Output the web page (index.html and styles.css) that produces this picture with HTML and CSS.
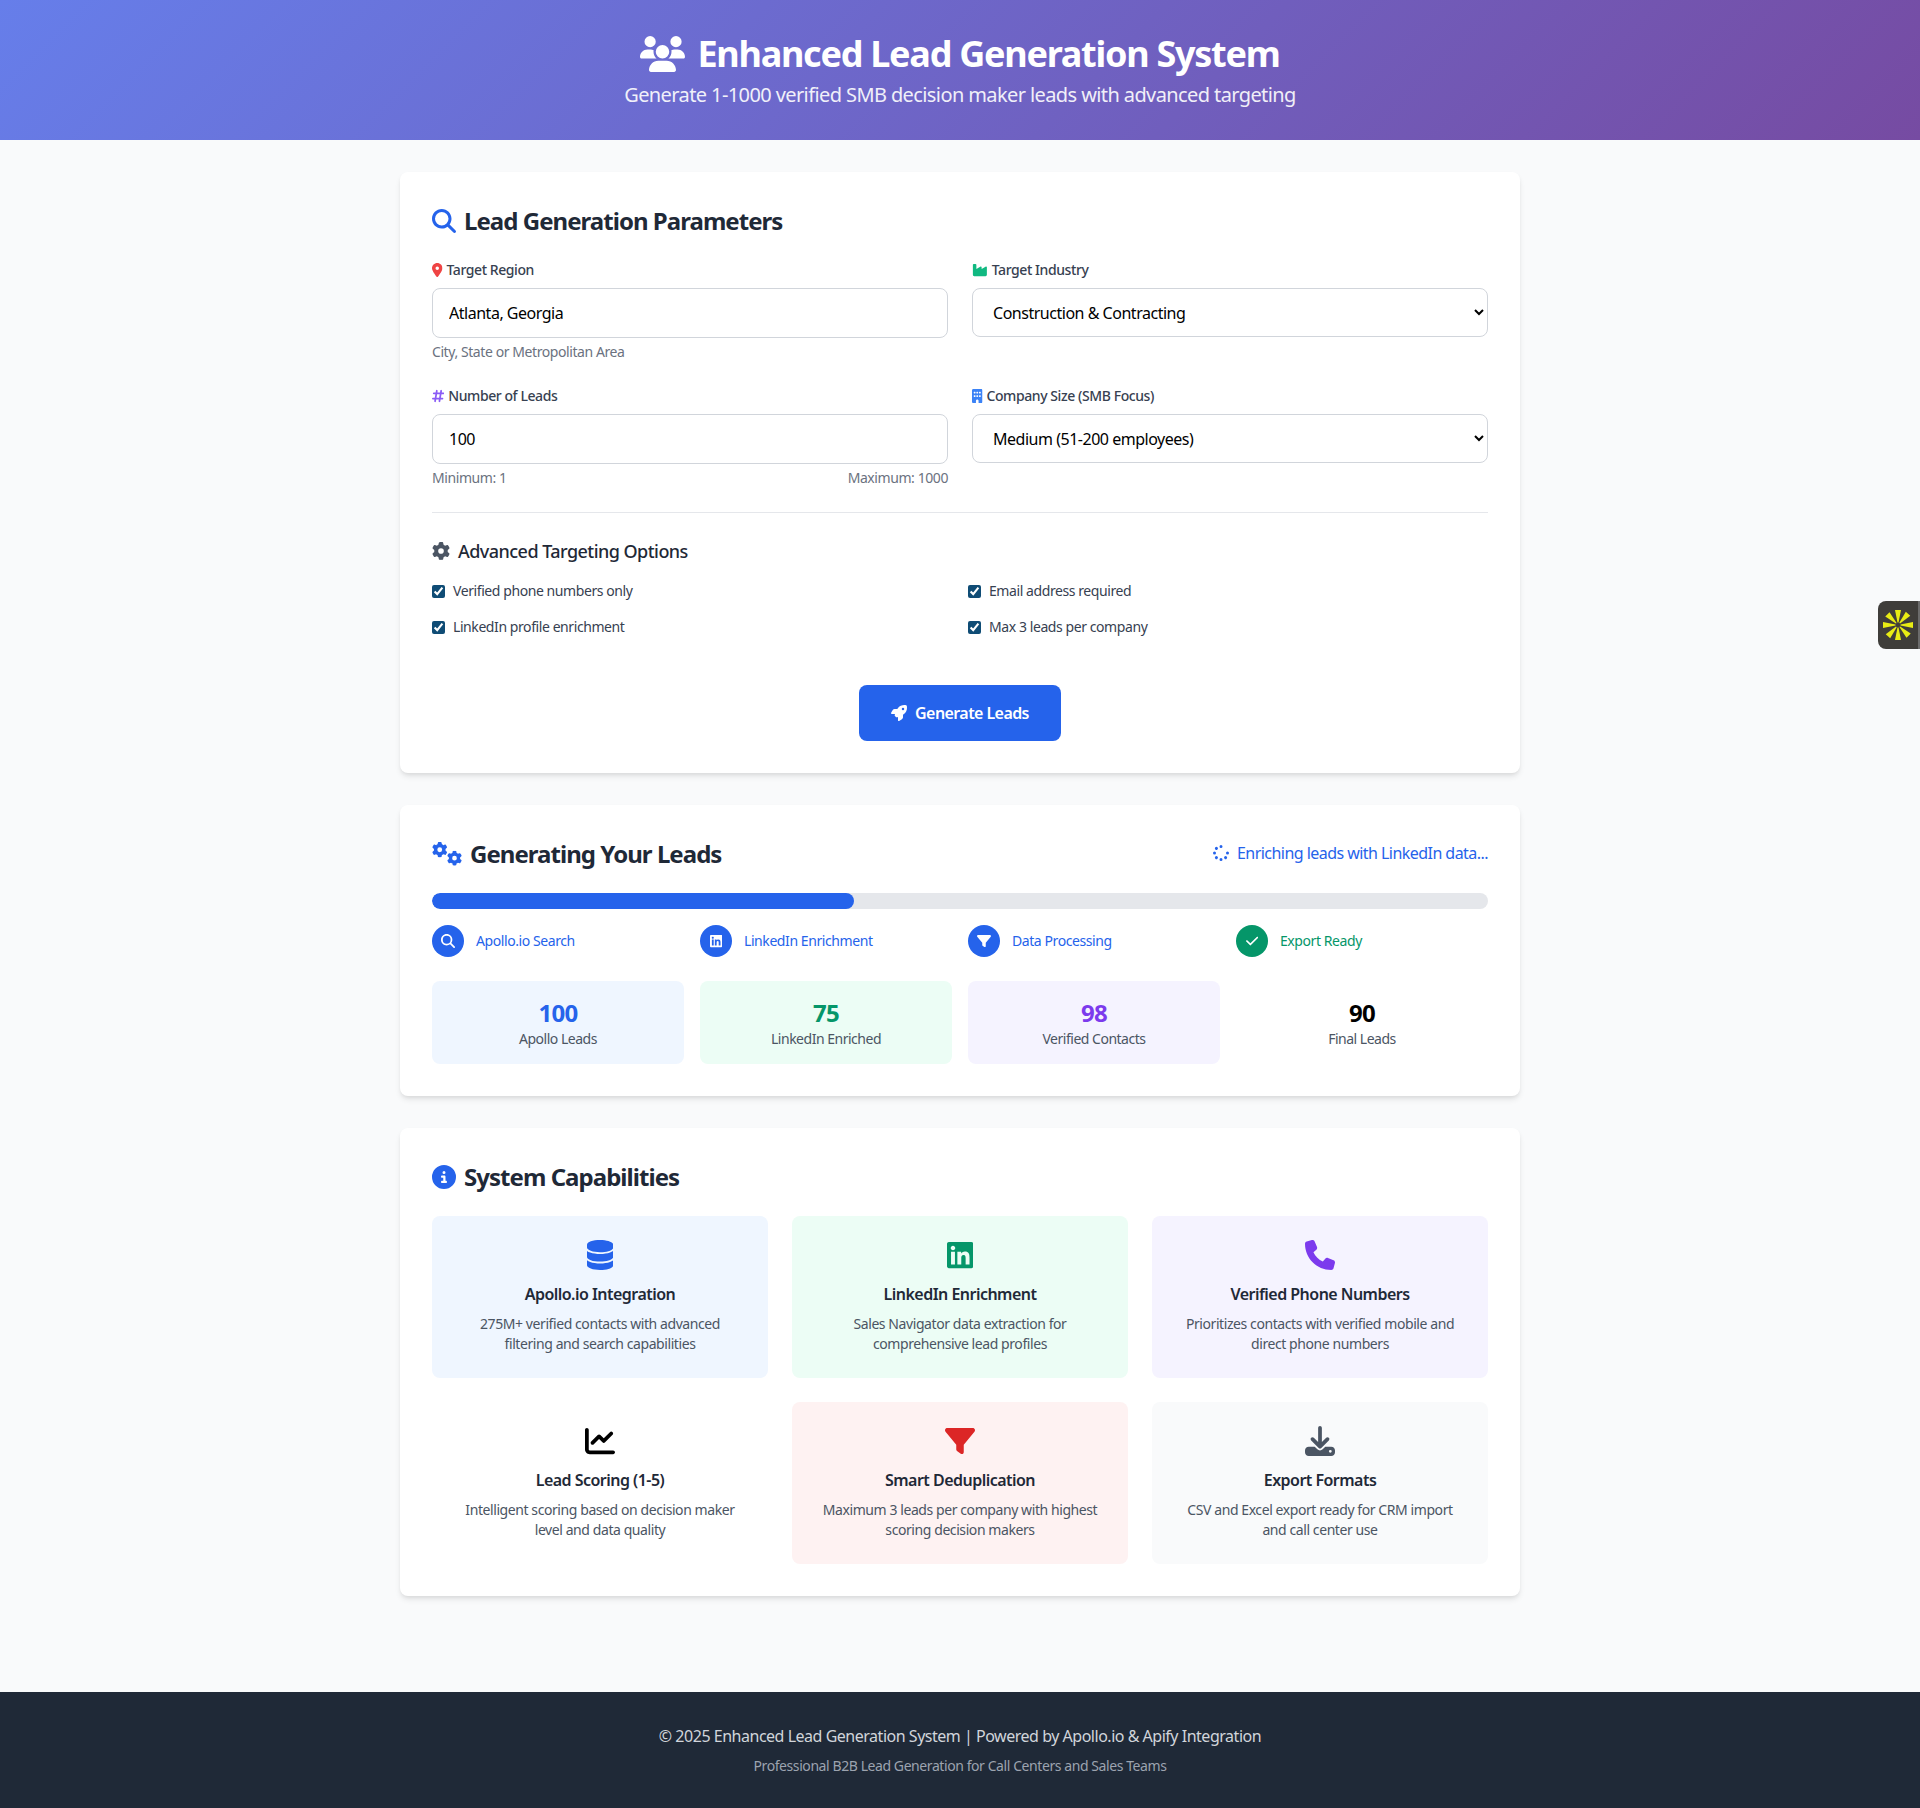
FILE: index.html
```html
<!DOCTYPE html>
<html lang="en">
<head>
   <meta charset="UTF-8">
   <meta name="viewport" content="width=device-width, initial-scale=1.0">
   <title>Enhanced Lead Generation System</title>
   <link rel="stylesheet" href="styles.css">
</head>
<body>
   <svg class="icon-defs" aria-hidden="true">
      <symbol id="i-users" viewBox="0 0 640 512"><path d="M144 0a80 80 0 1 1 0 160A80 80 0 1 1 144 0zM512 0a80 80 0 1 1 0 160A80 80 0 1 1 512 0zM0 298.7C0 239.8 47.8 192 106.7 192h42.7c15.9 0 31 3.5 44.6 9.7c-1.3 7.2-1.9 14.7-1.9 22.3c0 38.2 16.8 72.5 43.3 96c-.2 0-.4 0-.7 0H21.3C9.6 320 0 310.4 0 298.7zM405.3 320c-.2 0-.4 0-.7 0c26.6-23.5 43.3-57.8 43.3-96c0-7.6-.7-15-1.9-22.3c13.6-6.3 28.7-9.7 44.6-9.7h42.7C592.2 192 640 239.8 640 298.7c0 11.8-9.6 21.3-21.3 21.3H405.3zM224 224a96 96 0 1 1 192 0 96 96 0 1 1 -192 0zM128 485.3C128 411.7 187.7 352 261.3 352H378.7C452.3 352 512 411.7 512 485.3c0 14.7-11.9 26.7-26.7 26.7H154.7c-14.7 0-26.7-11.9-26.7-26.7z"/></symbol>
      <symbol id="i-search" viewBox="0 0 512 512"><path d="M416 208c0 45.9-14.9 88.3-40 122.7L502.6 457.4c12.5 12.5 12.5 32.8 0 45.3s-32.8 12.5-45.3 0L330.7 376c-34.4 25.2-76.8 40-122.7 40C93.1 416 0 322.9 0 208S93.1 0 208 0S416 93.1 416 208zM208 352a144 144 0 1 0 0-288 144 144 0 1 0 0 288z"/></symbol>
      <symbol id="i-location" viewBox="0 0 384 512"><path d="M215.7 499.2C267 435 384 279.4 384 192C384 86 298 0 192 0S0 86 0 192c0 87.4 117 243 168.3 307.2c12.3 15.3 35.1 15.3 47.4 0zM192 128a64 64 0 1 1 0 128 64 64 0 1 1 0-128z"/></symbol>
      <symbol id="i-industry" viewBox="0 0 576 512"><path d="M64 32C46.3 32 32 46.3 32 64V304v48 80c0 26.5 21.5 48 48 48H496c26.5 0 48-21.5 48-48V304 152.2c0-18.2-19.4-29.7-35.4-21.1L352 215.4V152.2c0-18.2-19.4-29.7-35.4-21.1L160 215.4V64c0-17.7-14.3-32-32-32H64z"/></symbol>
      <symbol id="i-hashtag" viewBox="0 0 448 512"><path d="M181.3 32.4c17.4 2.9 29.2 19.4 26.3 36.8L197.8 128h95.1l11.5-69.3c2.9-17.4 19.4-29.2 36.8-26.3s29.2 19.4 26.3 36.8L357.8 128H416c17.7 0 32 14.3 32 32s-14.3 32-32 32H347.1L325.8 320H384c17.7 0 32 14.3 32 32s-14.3 32-32 32H315.1l-11.5 69.3c-2.9 17.4-19.4 29.2-36.8 26.3s-29.2-19.4-26.3-36.8l9.8-58.7H155.1l-11.5 69.3c-2.9 17.4-19.4 29.2-36.8 26.3s-29.2-19.4-26.3-36.8L90.2 384H32c-17.7 0-32-14.3-32-32s14.3-32 32-32h68.9l21.3-128H64c-17.7 0-32-14.3-32-32s14.3-32 32-32h68.9l11.5-69.3c2.9-17.4 19.4-29.2 36.8-26.3zM187.1 192L165.8 320h95.1l21.3-128H187.1z"/></symbol>
      <symbol id="i-building" viewBox="0 0 384 512"><path d="M48 0C21.5 0 0 21.5 0 48V464c0 26.5 21.5 48 48 48h96V432c0-26.5 21.5-48 48-48s48 21.5 48 48v80h96c26.5 0 48-21.5 48-48V48c0-26.5-21.5-48-48-48H48zM64 240c0-8.8 7.2-16 16-16h32c8.8 0 16 7.2 16 16v32c0 8.8-7.2 16-16 16H80c-8.8 0-16-7.2-16-16V240zm112-16h32c8.8 0 16 7.2 16 16v32c0 8.8-7.2 16-16 16H176c-8.8 0-16-7.2-16-16V240c0-8.8 7.2-16 16-16zm80 16c0-8.8 7.2-16 16-16h32c8.8 0 16 7.2 16 16v32c0 8.8-7.2 16-16 16H272c-8.8 0-16-7.2-16-16V240zM80 96h32c8.8 0 16 7.2 16 16v32c0 8.8-7.2 16-16 16H80c-8.8 0-16-7.2-16-16V112c0-8.8 7.2-16 16-16zm80 16c0-8.8 7.2-16 16-16h32c8.8 0 16 7.2 16 16v32c0 8.8-7.2 16-16 16H176c-8.8 0-16-7.2-16-16V112zM272 96h32c8.8 0 16 7.2 16 16v32c0 8.8-7.2 16-16 16H272c-8.8 0-16-7.2-16-16V112c0-8.8 7.2-16 16-16z"/></symbol>
      <symbol id="i-gear" viewBox="0 0 512 512"><path d="M495.9 166.6c3.2 8.7 .5 18.4-6.4 24.6l-43.3 39.4c1.1 8.3 1.7 16.8 1.7 25.4s-.6 17.1-1.7 25.4l43.3 39.4c6.9 6.2 9.6 15.9 6.4 24.6c-4.4 11.9-9.7 23.3-15.8 34.3l-4.7 8.1c-6.6 11-14 21.4-22.1 31.2c-5.9 7.2-15.7 9.6-24.5 6.8l-55.7-17.7c-13.4 10.3-28.2 18.9-44 25.4l-12.5 57.1c-2 9.1-9 16.3-18.2 17.8c-13.8 2.3-28 3.5-42.5 3.5s-28.7-1.2-42.5-3.5c-9.2-1.5-16.2-8.7-18.2-17.8l-12.5-57.1c-15.8-6.5-30.6-15.1-44-25.4L83.1 425.9c-8.8 2.8-18.6 .3-24.5-6.8c-8.1-9.8-15.5-20.2-22.1-31.2l-4.7-8.1c-6.1-11-11.4-22.4-15.8-34.3c-3.2-8.7-.5-18.4 6.4-24.6l43.3-39.4C64.6 273.1 64 264.6 64 256s.6-17.1 1.7-25.4L22.4 191.2c-6.9-6.2-9.6-15.9-6.4-24.6c4.4-11.9 9.7-23.3 15.8-34.3l4.7-8.1c6.6-11 14-21.4 22.1-31.2c5.9-7.2 15.7-9.6 24.5-6.8l55.7 17.7c13.4-10.3 28.2-18.9 44-25.4l12.5-57.1c2-9.1 9-16.3 18.2-17.8C227.3 1.2 241.5 0 256 0s28.7 1.2 42.5 3.5c9.2 1.5 16.2 8.7 18.2 17.8l12.5 57.1c15.8 6.5 30.6 15.1 44 25.4l55.7-17.7c8.8-2.8 18.6-.3 24.5 6.8c8.1 9.8 15.5 20.2 22.1 31.2l4.7 8.1c6.1 11 11.4 22.4 15.8 34.3zM256 336a80 80 0 1 0 0-160 80 80 0 1 0 0 160z"/></symbol>
      <symbol id="i-rocket" viewBox="0 0 512 512"><path d="M156.6 384.9L125.7 354c-8.5-8.5-11.5-20.8-7.7-32.2c3-8.9 7-20.5 11.8-33.8L24 288c-8.6 0-16.6-4.6-20.9-12.1s-4.2-16.7 .2-24.1l52.5-88.5c13-21.9 36.5-35.3 61.9-35.3l82.3 0c2.4-4 4.8-7.7 7.2-11.3C289.1-4.1 411.1-8.1 483.9 5.3c11.6 2.1 20.6 11.2 22.8 22.8c13.4 72.9 9.3 194.8-111.4 276.7c-3.5 2.4-7.3 4.8-11.3 7.2v82.3c0 25.4-13.4 49-35.3 61.9l-88.5 52.5c-7.4 4.4-16.6 4.5-24.1 .2s-12.1-12.2-12.1-20.9V380.8c-14.1 4.9-26.4 8.9-35.7 11.9c-11.2 3.6-23.4 .5-31.8-7.8zM384 168a40 40 0 1 0 0-80 40 40 0 1 0 0 80z"/></symbol>
      <symbol id="i-spinner" viewBox="0 0 512 512"><path d="M304 48a48 48 0 1 0 -96 0 48 48 0 1 0 96 0zm0 416a48 48 0 1 0 -96 0 48 48 0 1 0 96 0zM48 304a48 48 0 1 0 0-96 48 48 0 1 0 0 96zm464-48a48 48 0 1 0 -96 0 48 48 0 1 0 96 0zM142.9 437A48 48 0 1 0 75 369.1 48 48 0 1 0 142.9 437zm0-294.2A48 48 0 1 0 75 75a48 48 0 1 0 67.9 67.9zM369.1 437A48 48 0 1 0 437 369.1 48 48 0 1 0 369.1 437z"/></symbol>
      <symbol id="i-linkedin" viewBox="0 0 448 512"><path d="M416 32H31.9C14.3 32 0 46.5 0 64.3v383.4C0 465.5 14.3 480 31.9 480H416c17.6 0 32-14.5 32-32.3V64.3c0-17.8-14.4-32.3-32-32.3zM135.4 416H69V202.2h66.5V416zm-33.2-243c-21.3 0-38.5-17.3-38.5-38.5S80.9 96 102.2 96c21.2 0 38.5 17.3 38.5 38.5 0 21.3-17.2 38.5-38.5 38.5zm282.1 243h-66.4V312c0-24.8-.5-56.7-34.5-56.7-34.6 0-39.9 27-39.9 54.9V416h-66.4V202.2h63.7v29.2h.9c8.9-16.8 30.6-34.5 62.9-34.5 67.2 0 79.7 44.3 79.7 101.9V416z"/></symbol>
      <symbol id="i-filter" viewBox="0 0 512 512"><path d="M3.9 54.9C10.5 40.9 24.5 32 40 32H472c15.5 0 29.5 8.9 36.1 22.9s4.6 30.5-5.2 42.5L320 320.9V448c0 12.1-6.8 23.2-17.7 28.6s-23.8 4.3-33.5-3l-64-48c-8.1-6-12.8-15.5-12.8-25.6V320.9L9 97.3C-.7 85.4-2.8 68.8 3.9 54.9z"/></symbol>
      <symbol id="i-check" viewBox="0 0 448 512"><path d="M438.6 105.4c12.5 12.5 12.5 32.8 0 45.3l-256 256c-12.5 12.5-32.8 12.5-45.3 0l-128-128c-12.5-12.5-12.5-32.8 0-45.3s32.8-12.5 45.3 0L160 338.7 393.4 105.4c12.5-12.5 32.8-12.5 45.3 0z"/></symbol>
      <symbol id="i-info" viewBox="0 0 512 512"><path d="M256 512A256 256 0 1 0 256 0a256 256 0 1 0 0 512zM216 336h24V272H216c-13.3 0-24-10.7-24-24s10.7-24 24-24h48c13.3 0 24 10.7 24 24v88h8c13.3 0 24 10.7 24 24s-10.7 24-24 24H216c-13.3 0-24-10.7-24-24s10.7-24 24-24zm40-208a32 32 0 1 1 0 64 32 32 0 1 1 0-64z"/></symbol>
      <symbol id="i-database" viewBox="0 0 448 512"><path d="M448 80v48c0 44.2-100.3 80-224 80S0 172.2 0 128V80C0 35.8 100.3 0 224 0S448 35.8 448 80zM393.2 214.7c20.8-7.4 39.9-16.9 54.8-28.6V288c0 44.2-100.3 80-224 80S0 332.2 0 288V186.1c14.9 11.8 34 21.2 54.8 28.6C99.7 230.7 159.5 240 224 240s124.3-9.3 169.2-25.3zM0 346.1c14.9 11.8 34 21.2 54.8 28.6C99.7 390.7 159.5 400 224 400s124.3-9.3 169.2-25.3c20.8-7.4 39.9-16.9 54.8-28.6V432c0 44.2-100.3 80-224 80S0 476.2 0 432V346.1z"/></symbol>
      <symbol id="i-phone" viewBox="0 0 512 512"><path d="M164.9 24.6c-7.7-18.6-28-28.5-47.4-23.2l-88 24C12.1 30.2 0 46 0 64C0 311.4 200.6 512 448 512c18 0 33.8-12.1 38.6-29.5l24-88c5.3-19.4-4.6-39.7-23.2-47.4l-96-40c-16.3-6.8-35.2-2.1-46.3 11.6L304.7 368C234.3 334.7 177.3 277.7 144 207.3L193.3 167c13.7-11.2 18.4-30 11.6-46.3l-40-96z"/></symbol>
      <symbol id="i-chart" viewBox="0 0 512 512"><path d="M64 64c0-17.7-14.3-32-32-32S0 46.3 0 64V400c0 44.2 35.8 80 80 80H480c17.7 0 32-14.3 32-32s-14.3-32-32-32H80c-8.8 0-16-7.2-16-16V64zm406.6 86.6c12.5-12.5 12.5-32.8 0-45.3s-32.8-12.5-45.3 0L320 210.7l-57.4-57.4c-12.5-12.5-32.8-12.5-45.3 0l-112 112c-12.5 12.5-12.5 32.8 0 45.3s32.8 12.5 45.3 0L240 221.3l57.4 57.4c12.5 12.5 32.8 12.5 45.3 0l128-128z"/></symbol>
      <symbol id="i-download" viewBox="0 0 512 512"><path d="M288 32c0-17.7-14.3-32-32-32s-32 14.3-32 32V274.7l-73.4-73.4c-12.5-12.5-32.8-12.5-45.3 0s-12.5 32.8 0 45.3l128 128c12.5 12.5 32.8 12.5 45.3 0l128-128c12.5-12.5 12.5-32.8 0-45.3s-32.8-12.5-45.3 0L288 274.7V32zM64 352c-35.3 0-64 28.7-64 64v32c0 35.3 28.7 64 64 64H448c35.3 0 64-28.7 64-64V416c0-35.3-28.7-64-64-64H346.5l-45.3 45.3c-25 25-65.5 25-90.5 0L165.5 352H64zm368 56a24 24 0 1 1 0 48 24 24 0 1 1 0-48z"/></symbol>
   </svg>

   <header class="site-header">
      <h1><svg class="icon" viewBox="0 0 640 512"><use href="#i-users"/></svg>Enhanced Lead Generation System</h1>
      <p>Generate 1-1000 verified SMB decision maker leads with advanced targeting</p>
   </header>

   <main class="container">
      <!-- Search form -->
      <section class="card">
         <h2 class="card-title"><svg class="icon text-blue" viewBox="0 0 512 512"><use href="#i-search"/></svg>Lead Generation Parameters</h2>
         <form>
            <div class="form-grid">
               <div class="field">
                  <label for="region"><svg class="icon text-red" viewBox="0 0 384 512"><use href="#i-location"/></svg>Target Region</label>
                  <input id="region" type="text" value="Atlanta, Georgia">
                  <p class="hint">City, State or Metropolitan Area</p>
               </div>
               <div class="field">
                  <label for="industry"><svg class="icon text-emerald" viewBox="0 0 576 512"><use href="#i-industry"/></svg>Target Industry</label>
                  <select id="industry">
                     <option>Construction &amp; Contracting</option>
                     <option>Healthcare</option>
                     <option>Manufacturing</option>
                  </select>
               </div>
               <div class="field">
                  <label for="count"><svg class="icon text-violet" viewBox="0 0 448 512"><use href="#i-hashtag"/></svg>Number of Leads</label>
                  <input id="count" type="number" min="1" max="1000" value="100">
                  <p class="hint hint-split"><span>Minimum: 1</span><span>Maximum: 1000</span></p>
               </div>
               <div class="field">
                  <label for="size"><svg class="icon text-sky" viewBox="0 0 384 512"><use href="#i-building"/></svg>Company Size (SMB Focus)</label>
                  <select id="size">
                     <option>Medium (51-200 employees)</option>
                     <option>Small (11-50 employees)</option>
                  </select>
               </div>
            </div>

            <div class="advanced">
               <h3><svg class="icon" viewBox="0 0 512 512"><use href="#i-gear"/></svg>Advanced Targeting Options</h3>
               <div class="check-grid">
                  <label class="check"><input type="checkbox" checked>Verified phone numbers only</label>
                  <label class="check"><input type="checkbox" checked>Email address required</label>
                  <label class="check"><input type="checkbox" checked>LinkedIn profile enrichment</label>
                  <label class="check"><input type="checkbox" checked>Max 3 leads per company</label>
               </div>
            </div>

            <div class="actions">
               <button type="button" class="btn-generate"><svg class="icon" viewBox="0 0 512 512"><use href="#i-rocket"/></svg>Generate Leads</button>
            </div>
         </form>
      </section>

      <!-- Progress -->
      <section class="card">
         <div class="progress-head">
            <h2 class="card-title"><svg class="icon text-blue" viewBox="0 0 640 512"><use href="#i-gear" x="0" y="0" width="330" height="330"/><use href="#i-gear" x="320" y="185" width="320" height="320"/></svg>Generating Your Leads</h2>
            <span class="status"><svg class="icon" viewBox="0 0 512 512"><use href="#i-spinner"/></svg>Enriching leads with LinkedIn data...</span>
         </div>
         <div class="progress-bar"><div class="progress-fill" style="width: 40%"></div></div>
         <div class="steps">
            <div class="step"><span class="step-dot"><svg class="icon" viewBox="0 0 512 512"><use href="#i-search"/></svg></span>Apollo.io Search</div>
            <div class="step"><span class="step-dot"><svg class="icon" viewBox="0 0 448 512"><use href="#i-linkedin"/></svg></span>LinkedIn Enrichment</div>
            <div class="step"><span class="step-dot"><svg class="icon" viewBox="0 0 512 512"><use href="#i-filter"/></svg></span>Data Processing</div>
            <div class="step step-done"><span class="step-dot"><svg class="icon" viewBox="0 0 448 512"><use href="#i-check"/></svg></span>Export Ready</div>
         </div>
         <div class="stats">
            <div class="stat bg-blue"><strong class="text-blue">100</strong><span>Apollo Leads</span></div>
            <div class="stat bg-green"><strong class="text-green">75</strong><span>LinkedIn Enriched</span></div>
            <div class="stat bg-purple"><strong class="text-purple">98</strong><span>Verified Contacts</span></div>
            <div class="stat"><strong>90</strong><span>Final Leads</span></div>
         </div>
      </section>

      <!-- Capabilities -->
      <section class="card">
         <h2 class="card-title"><svg class="icon text-blue" viewBox="0 0 512 512"><use href="#i-info"/></svg>System Capabilities</h2>
         <div class="features">
            <div class="feature bg-blue">
               <svg class="icon text-blue" viewBox="0 0 448 512"><use href="#i-database"/></svg>
               <h4>Apollo.io Integration</h4>
               <p>275M+ verified contacts with advanced filtering and search capabilities</p>
            </div>
            <div class="feature bg-green">
               <svg class="icon text-green" viewBox="0 0 448 512"><use href="#i-linkedin"/></svg>
               <h4>LinkedIn Enrichment</h4>
               <p>Sales Navigator data extraction for comprehensive lead profiles</p>
            </div>
            <div class="feature bg-purple">
               <svg class="icon text-purple" viewBox="0 0 512 512"><use href="#i-phone"/></svg>
               <h4>Verified Phone Numbers</h4>
               <p>Prioritizes contacts with verified mobile and direct phone numbers</p>
            </div>
            <div class="feature">
               <svg class="icon" viewBox="0 0 512 512"><use href="#i-chart"/></svg>
               <h4>Lead Scoring (1-5)</h4>
               <p>Intelligent scoring based on decision maker level and data quality</p>
            </div>
            <div class="feature bg-rose">
               <svg class="icon text-crimson" viewBox="0 0 512 512"><use href="#i-filter"/></svg>
               <h4>Smart Deduplication</h4>
               <p>Maximum 3 leads per company with highest scoring decision makers</p>
            </div>
            <div class="feature bg-gray">
               <svg class="icon text-slate" viewBox="0 0 512 512"><use href="#i-download"/></svg>
               <h4>Export Formats</h4>
               <p>CSV and Excel export ready for CRM import and call center use</p>
            </div>
         </div>
      </section>
   </main>

   <footer class="site-footer">
      <p>&copy; 2025 Enhanced Lead Generation System | Powered by Apollo.io &amp; Apify Integration</p>
      <p class="footer-small">Professional B2B Lead Generation for Call Centers and Sales Teams</p>
   </footer>

   <!-- Side widget -->
   <div class="side-widget">
      <svg viewBox="-16 -16 32 32">
         <g fill="#e8ec14">
            <path d="M-.5 -2.5 L-3 -15 L3 -15 L.5 -2.5Z" transform="rotate(0)"/>
            <path d="M-.5 -2.5 L-3 -15 L3 -15 L.5 -2.5Z" transform="rotate(42)"/>
            <path d="M-.5 -2.5 L-3 -15 L3 -15 L.5 -2.5Z" transform="rotate(90)"/>
            <path d="M-.5 -2.5 L-3 -15 L3 -15 L.5 -2.5Z" transform="rotate(135)"/>
            <path d="M-.5 -2.5 L-3 -15 L3 -15 L.5 -2.5Z" transform="rotate(180)"/>
            <path d="M-.5 -2.5 L-3 -15 L3 -15 L.5 -2.5Z" transform="rotate(222)"/>
            <path d="M-.5 -2.5 L-3 -15 L3 -15 L.5 -2.5Z" transform="rotate(270)"/>
            <path d="M-.5 -2.5 L-3 -15 L3 -15 L.5 -2.5Z" transform="rotate(315)"/>
         </g>
      </svg>
   </div>
</body>
</html>
```

FILE: styles.css
```css
* {
   box-sizing: border-box;
   letter-spacing: -0.03em; /* Noto Sans runs wider than the original font */
}

body {
   font-family: "Noto Sans", "Open Sans", Arial, sans-serif;
   margin: 0;
   min-height: 1808px;
   background-color: #f9fafb;
   color: #000;
   line-height: 1.5;
}

h1, h2, h3, h4, p {
   margin: 0;
}

.icon-defs {
   display: none;
}

.icon {
   height: 1em;
   width: auto;
   fill: currentColor;
   flex-shrink: 0;
}

.text-blue { color: #2563eb; }
.text-green { color: #059669; }
.text-purple { color: #7c3aed; }
.text-crimson { color: #dc2626; }
.text-slate { color: #4b5563; }
.text-red { color: #ef4444; }
.text-emerald { color: #10b981; }
.text-violet { color: #8b5cf6; }
.text-sky { color: #3b82f6; }

.bg-blue { background-color: #eff6ff; }
.bg-green { background-color: #ecfdf5; }
.bg-purple { background-color: #f5f3ff; }
.bg-rose { background-color: #fef2f2; }
.bg-gray { background-color: #f9fafb; }

/* Header */
.site-header {
   height: 140px;
   padding: 32px 16px;
   text-align: center;
   color: #fff;
   background: linear-gradient(135deg, #667eea 0%, #764ba2 100%);
}

.site-header h1 {
   display: flex;
   justify-content: center;
   align-items: center;
   gap: 12px;
   height: 40px;
   padding-top: 4px;
   margin-bottom: 8px;
   font-size: 36px;
   line-height: 40px;
   font-weight: 700;
   letter-spacing: -0.035em;
}

.site-header p {
   margin-top: 9px;
   font-size: 20px;
   line-height: 28px;
   opacity: 0.9;
}

/* Main */
.container {
   max-width: 1152px;
   margin: 0 auto;
   padding: 32px 16px;
}

.card {
   background-color: #fff;
   border-radius: 8px;
   padding: 32px;
   margin-bottom: 32px;
   box-shadow: 0 4px 6px -1px rgba(0, 0, 0, 0.1), 0 2px 4px -1px rgba(0, 0, 0, 0.06);
}

.card-title {
   display: flex;
   align-items: center;
   gap: 8px;
   height: 32px;
   padding-top: 2px;
   margin-bottom: 24px;
   font-size: 24px;
   line-height: 32px;
   font-weight: 700;
   letter-spacing: -0.04em;
   color: #1f2937;
}

/* Form */
.form-grid {
   display: grid;
   grid-template-columns: 1fr 1fr;
   gap: 24px;
}

.field {
   height: 102px;
}

.field > label {
   display: flex;
   align-items: center;
   gap: 4px;
   margin-bottom: 8px;
   font-size: 14px;
   line-height: 20px;
   font-weight: 500;
   color: #374151;
}

.field input,
.field select {
   display: block;
   width: 100%;
   padding: 0 16px;
   border: 1px solid #d1d5db;
   border-radius: 8px;
   background-color: #fff;
   font-family: inherit;
   font-size: 16px;
   color: #000;
}

.field input {
   height: 50px;
}

.field select {
   height: 49px;
}

.hint {
   margin-top: 4px;
   font-size: 14px;
   line-height: 20px;
   color: #6b7280;
}

.hint span {
   letter-spacing: inherit;
}

.hint-split {
   display: flex;
   justify-content: space-between;
}

.advanced {
   margin-top: 24px;
   padding-top: 24px;
   border-top: 1px solid #e5e7eb;
}

.advanced h3 {
   display: flex;
   align-items: center;
   gap: 8px;
   margin-bottom: 16px;
   font-size: 18px;
   line-height: 28px;
   font-weight: 500;
   color: #1f2937;
}

.advanced h3 .icon {
   color: #4b5563;
}

.check-grid {
   display: grid;
   grid-template-columns: 1fr 1fr;
   gap: 16px;
}

.check {
   display: flex;
   align-items: center;
   gap: 8px;
   font-size: 14px;
   line-height: 20px;
   color: #374151;
}

.check input {
   margin: 0;
   accent-color: #0f4c75;
}

.actions {
   display: flex;
   justify-content: center;
   margin-top: 48px;
}

.btn-generate {
   display: flex;
   align-items: center;
   gap: 8px;
   height: 56px;
   padding: 0 32px;
   border: 0;
   border-radius: 8px;
   background-color: #2563eb;
   color: #fff;
   font-family: inherit;
   font-size: 16px;
   font-weight: 600;
   letter-spacing: -0.036em;
}

/* Progress */
.progress-head {
   display: flex;
   justify-content: space-between;
   align-items: center;
   margin-bottom: 24px;
}

.progress-head .card-title {
   margin-bottom: 0;
}

.status {
   display: flex;
   align-items: center;
   gap: 8px;
   color: #2563eb;
   font-size: 16px;
   letter-spacing: -0.034em;
}

.progress-bar {
   height: 16px;
   margin-bottom: 16px;
   border-radius: 999px;
   background-color: #e5e7eb;
   overflow: hidden;
}

.progress-fill {
   height: 100%;
   border-radius: 999px;
   background-color: #2563eb;
}

.steps,
.stats {
   display: grid;
   grid-template-columns: repeat(4, 1fr);
   gap: 16px;
}

.steps {
   margin-bottom: 24px;
}

.step {
   display: flex;
   align-items: center;
   gap: 12px;
   font-size: 14px;
   line-height: 20px;
   color: #2563eb;
}

.step-dot {
   display: flex;
   justify-content: center;
   align-items: center;
   width: 32px;
   height: 32px;
   border-radius: 50%;
   background-color: #2563eb;
   color: #fff;
   font-size: 14px;
}

.step-done {
   color: #059669;
}

.step-done .step-dot {
   background-color: #059669;
}

.stat {
   height: 83px;
   padding: 16px;
   border-radius: 8px;
   text-align: center;
}

.stat strong {
   display: block;
   font-size: 24px;
   line-height: 32px;
   font-weight: 700;
}

.stat span {
   display: block;
   font-size: 14px;
   line-height: 19px;
   letter-spacing: -0.035em;
   color: #4b5563;
}

/* Capabilities */
.features {
   display: grid;
   grid-template-columns: repeat(3, 1fr);
   gap: 24px;
}

.feature {
   height: 162px;
   padding: 24px;
   border-radius: 8px;
   text-align: center;
}

.feature .icon {
   display: block;
   margin: 0 auto 12px;
   font-size: 30px;
}

.feature h4 {
   margin-bottom: 8px;
   font-size: 16px;
   line-height: 24px;
   font-weight: 600;
   letter-spacing: -0.033em;
   color: #1f2937;
}

.feature p {
   font-size: 14px;
   line-height: 20px;
   color: #4b5563;
}

/* Footer */
.site-footer {
   margin-top: 32px;
   padding: 32px 16px;
   background-color: #1f2937;
   color: #d1d5db;
   text-align: center;
}

.footer-small {
   margin-top: 8px;
   font-size: 14px;
   line-height: 20px;
   color: #9ca3af;
}

/* Floating widget on the right edge */
.side-widget {
   position: fixed;
   top: 601px;
   right: 0;
   display: flex;
   justify-content: center;
   align-items: center;
   width: 42px;
   height: 48px;
   border-radius: 8px 0 0 8px;
   border-right: 2px solid #6b6b6b;
   background-color: #3f3d3a;
}

.side-widget svg {
   width: 32px;
   height: 32px;
}
```
